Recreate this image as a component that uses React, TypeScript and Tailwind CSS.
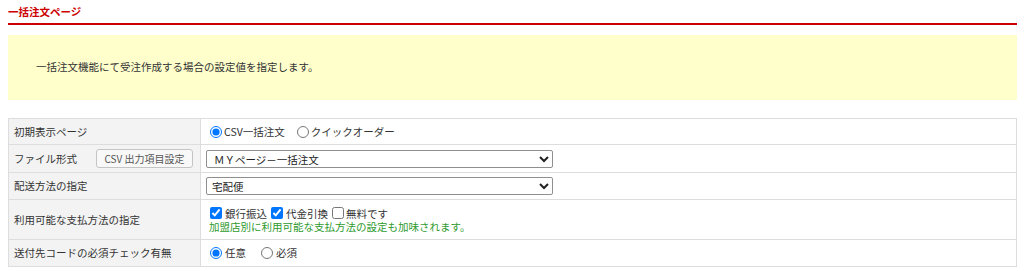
import React from "react";

const font = { fontFamily: '"Noto Sans CJK JP", "Noto Sans", sans-serif' };

function Label({ children }: { children: React.ReactNode }) {
  return (
    <div className="bg-[#f3f3f3] border-r border-[#dddddd] pl-[5px] flex items-center text-[10.5px] text-[#333] whitespace-nowrap">
      {children}
    </div>
  );
}

export default function App() {
  return (
    <div className="bg-white w-[1024px] h-[271px] pl-[8px] pr-[7px] text-[#333] leading-[14px]" style={font}>
      <div className="pt-[5px] h-[23px] text-[10.5px] font-bold text-[#cc0000] leading-[14px]">一括注文ページ</div>
      <div className="h-[2px] bg-[#cc0000]" />
      <div className="mt-[10px] h-[65px] bg-[#ffffcc] flex items-center pl-[28px] pb-[1px] text-[10.5px] text-[#333]">
        一括注文機能にて受注作成する場合の設定値を指定します。
      </div>
      <div className="mt-[18px] border border-[#dddddd] grid grid-cols-[192px_1fr]">
        <Label>初期表示ページ</Label>
        <div className="h-[25px] flex items-center pl-[9px] text-[10.5px] whitespace-nowrap">
          <label className="flex items-center">
            <input type="radio" name="p" defaultChecked className="m-0 w-[12px] h-[12px]" />
            <span className="ml-[2px]">CSV一括注文</span>
          </label>
          <label className="flex items-center ml-[12px]">
            <input type="radio" name="p" className="m-0 w-[12px] h-[12px]" />
            <span className="ml-[2px]">クイックオーダー</span>
          </label>
        </div>

        <div className="col-span-2 h-px bg-[#dddddd]" />

        <div className="bg-[#f3f3f3] border-r border-[#dddddd] pl-[5px] pr-[7px] flex items-center justify-between text-[10.5px] whitespace-nowrap">
          <span>ファイル形式</span>
          <button className="h-[19px] w-[97px] border border-[#c4c4c4] rounded-[3px] bg-[#f8f8f8] text-[10px] text-[#555] leading-none whitespace-nowrap">
            CSV 出力項目設定
          </button>
        </div>
        <div className="h-[27px] flex items-center pl-[5px]">
          <select className="w-[347px] h-[18px] border border-[#8f8f8f] rounded-[2px] text-[10.5px] leading-[14px] pl-[3px] bg-white text-[#222]">
            <option>ＭＹページ－一括注文</option>
          </select>
        </div>

        <div className="col-span-2 h-px bg-[#dddddd]" />

        <Label>配送方法の指定</Label>
        <div className="h-[26px] flex items-center pl-[5px]">
          <select className="w-[347px] h-[18px] border border-[#8f8f8f] rounded-[2px] text-[10.5px] leading-[14px] pl-[1px] bg-white text-[#222]">
            <option>宅配便</option>
          </select>
        </div>

        <div className="col-span-2 h-px bg-[#dddddd]" />

        <Label>利用可能な支払方法の指定</Label>
        <div className="h-[39px] flex flex-col justify-center pl-[9px] text-[10.5px] leading-[13px] whitespace-nowrap">
          <div className="flex items-center">
            <input type="checkbox" defaultChecked className="m-0 w-[12px] h-[12px]" />
            <span className="ml-[3px]">銀行振込</span>
            <input type="checkbox" defaultChecked className="m-0 ml-[4px] w-[12px] h-[12px]" />
            <span className="ml-[3px]">代金引換</span>
            <input type="checkbox" className="m-0 ml-[4px] w-[12px] h-[12px]" />
            <span className="ml-[2px]">無料です</span>
          </div>
          <div className="text-[#2e9a2e] -ml-[1px]">加盟店別に利用可能な支払方法の設定も加味されます。</div>
        </div>

        <div className="col-span-2 h-px bg-[#dddddd]" />

        <Label>送付先コードの必須チェック有無</Label>
        <div className="h-[26px] flex items-center pl-[9px] text-[10.5px] whitespace-nowrap">
          <label className="flex items-center">
            <input type="radio" name="q" defaultChecked className="m-0 w-[12px] h-[12px]" />
            <span className="ml-[3px]">任意</span>
          </label>
          <label className="flex items-center ml-[15px]">
            <input type="radio" name="q" className="m-0 w-[12px] h-[12px]" />
            <span className="ml-[3px]">必須</span>
          </label>
        </div>
      </div>
    </div>
  );
}
